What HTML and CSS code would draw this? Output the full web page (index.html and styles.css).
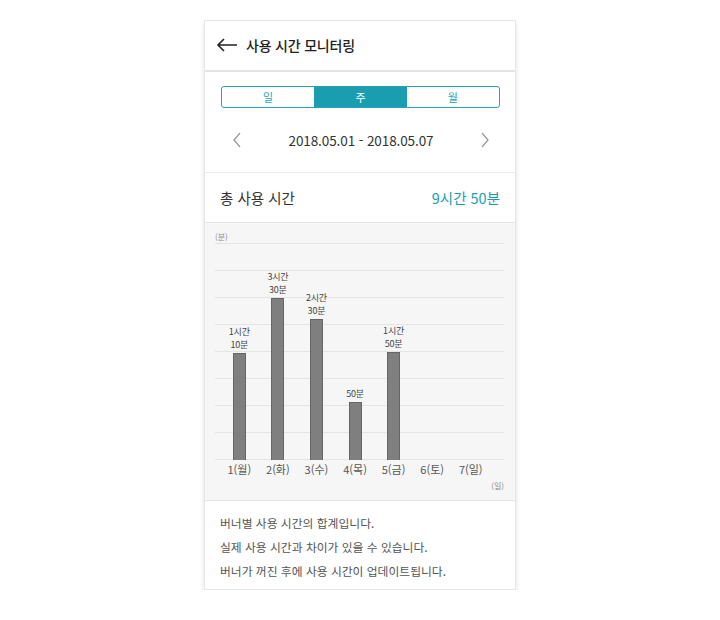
FILE: index.html
```html
<!DOCTYPE html>
<html lang="ko">
<head>
<meta charset="utf-8">
<title>사용 시간 모니터링</title>
<link rel="stylesheet" href="styles.css">
</head>
<body>
<div class="phone">
  <header class="header">
    <svg class="back" width="22" height="14" viewBox="0 0 22 14">
      <path d="M21 7H2M8 1L2 7l6 6" fill="none" stroke="#222" stroke-width="1.6"/>
    </svg>
    <h1 class="title">사용 시간 모니터링</h1>
  </header>
  <div class="tabs-wrap">
    <div class="tabs">
      <div class="tab">일</div>
      <div class="tab active">주</div>
      <div class="tab">월</div>
    </div>
  </div>
  <div class="date-row">
    <svg class="chev" width="10" height="16" viewBox="0 0 10 16"><path d="M8 1L2 8l6 7" fill="none" stroke="#999" stroke-width="1.3"/></svg>
    <span class="date">2018.05.01 - 2018.05.07</span>
    <svg class="chev" width="10" height="16" viewBox="0 0 10 16"><path d="M2 1l6 7-6 7" fill="none" stroke="#999" stroke-width="1.3"/></svg>
  </div>
  <div class="total-row">
    <span class="total-label">총 사용 시간</span>
    <span class="total-value">9시간 50분</span>
  </div>
  <div class="chart">
    <div class="unit-y">(분)</div>
    <div class="plot">
      <div class="col"><div class="val"><span>1시간</span><span>10분</span></div><div class="bar" style="height:107px"></div></div>
      <div class="col"><div class="val"><span>3시간</span><span>30분</span></div><div class="bar" style="height:162px"></div></div>
      <div class="col"><div class="val"><span>2시간</span><span>30분</span></div><div class="bar" style="height:141px"></div></div>
      <div class="col"><div class="val"><span>50분</span></div><div class="bar" style="height:58px"></div></div>
      <div class="col"><div class="val"><span>1시간</span><span>50분</span></div><div class="bar" style="height:108px"></div></div>
      <div class="col"></div>
      <div class="col"></div>
    </div>
    <div class="xaxis">
      <span>1(월)</span><span>2(화)</span><span>3(수)</span><span>4(목)</span><span>5(금)</span><span>6(토)</span><span>7(일)</span>
    </div>
    <div class="unit-x">(일)</div>
  </div>
  <div class="notes">
    <p>버너별 사용 시간의 합계입니다.</p>
    <p>실제 사용 시간과 차이가 있을 수 있습니다.</p>
    <p>버너가 꺼진 후에 사용 시간이 업데이트됩니다.</p>
  </div>
</div>
</body>
</html>
```
FILE: styles.css
```css
* { box-sizing: border-box; }
html, body { margin: 0; padding: 0; background: #fff; }
body { font-family: "Noto Sans CJK KR", "Noto Sans", sans-serif; color: #333; }

.phone {
  width: 312px;
  margin: 20px auto 0;
  border: 1px solid #e6e6e6;
  background: #fff;
  box-shadow: 0 3px 5px rgba(0,0,0,0.12);
}

.header {
  height: 51px;
  display: flex;
  align-items: center;
  padding: 0 0 2px 11px;
  border-bottom: 2px solid #e3e3e3;
}
.back { margin-right: 8px; }
.title { margin: 0; font-size: 14px; font-weight: 500; color: #222; letter-spacing: -0.2px; }

.tabs-wrap { padding: 14px 15px 0 16px; }
.tabs {
  display: flex;
  height: 22px;
  border: 1.5px solid #2aa3b3;
  border-radius: 3px;
  overflow: hidden;
}
.tab {
  flex: 1;
  display: flex;
  align-items: center;
  justify-content: center;
  font-size: 11px;
  color: #2aa3b3;
  line-height: 1;
}
.tab.active { background: #1a9db0; color: #fff; }

.date-row {
  height: 65px;
  display: flex;
  align-items: center;
  justify-content: space-between;
  padding: 0 25px 0 27px;
  border-bottom: 1px solid #ececec;
}
.date { font-size: 13.5px; color: #333; letter-spacing: -0.1px; }

.total-row {
  height: 50px;
  display: flex;
  align-items: center;
  justify-content: space-between;
  padding: 0 15px 0 15px;
  border-bottom: 1px solid #e4e4e4;
}
.total-label { font-size: 14.5px; color: #333; }
.total-value { font-size: 14.5px; color: #1a9db0; }

.chart {
  background: #f6f6f6;
  padding: 8px 11px 8px 10px;
  border-bottom: 1px solid #e4e4e4;
}
.unit-y { font-size: 8px; line-height: 12px; color: #888; }
.plot {
  height: 217px;
  display: flex;
  align-items: flex-end;
  padding: 0 14px 0 5px;
  background: repeating-linear-gradient(to bottom, #e4e4e4 0, #e4e4e4 1px, transparent 1px, transparent 27px);
}
.col {
  flex: 1;
  display: flex;
  flex-direction: column;
  align-items: center;
  justify-content: flex-end;
  height: 100%;
}
.val {
  display: flex;
  flex-direction: column;
  align-items: center;
  margin-bottom: 2px;
}
.val span {
  display: block;
  font-size: 9px;
  line-height: 13px;
  height: 13px;
  color: #444;
  letter-spacing: -0.2px;
  white-space: nowrap;
}
.bar {
  width: 13px;
  background: #7f7f7f;
  border: 1px solid #666;
  border-bottom: none;
}
.xaxis {
  display: flex;
  padding: 0 14px 0 5px;
  margin-top: 2px;
}
.xaxis span {
  flex: 1;
  text-align: center;
  font-size: 11px;
  line-height: 14px;
  color: #555;
}
.unit-x {
  font-size: 8px;
  line-height: 12px;
  color: #888;
  text-align: right;
  margin-top: 4px;
}

.notes { padding: 10px 15px 6px; }
.notes p {
  margin: 0;
  font-size: 11.8px;
  line-height: 24px;
  color: #555;
}
```
